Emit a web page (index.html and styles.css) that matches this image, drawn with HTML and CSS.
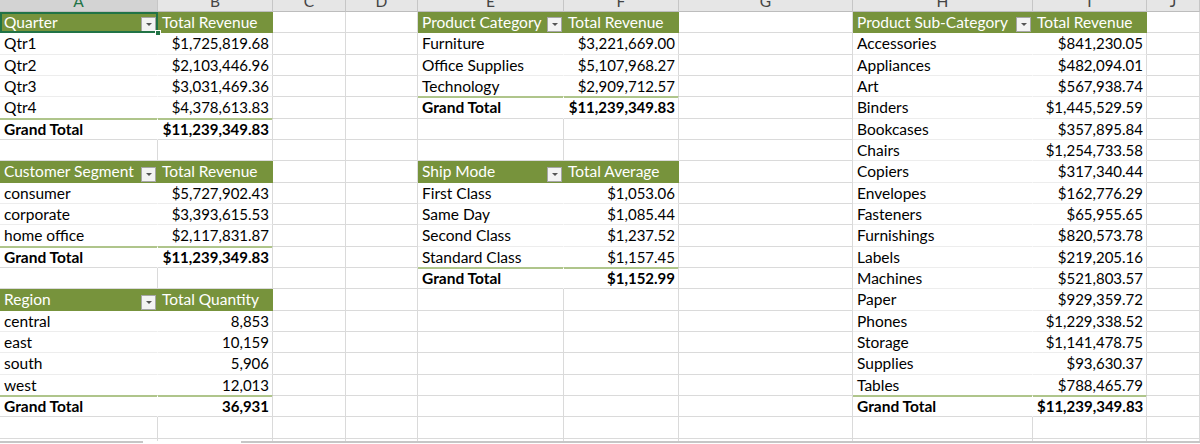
FILE: index.html
```html
<!DOCTYPE html>
<html>
<head>
<meta charset="utf-8">
<title>Pivot tables</title>
<link rel="stylesheet" href="styles.css">
</head>
<body>
<div class="app">
  <div class="sheet">
    <div class="grid">
      <div class="ch sel">A</div><div class="ch">B</div><div class="ch">C</div><div class="ch">D</div><div class="ch">E</div><div class="ch">F</div><div class="ch">G</div><div class="ch">H</div><div class="ch">I</div><div class="ch">J</div>

      <div class="hd cur"><span>Quarter</span><span class="dd"></span></div><div class="hv">Total Revenue</div><div></div><div></div><div class="hd"><span>Product Category</span><span class="dd"></span></div><div class="hv">Total Revenue</div><div></div><div class="hd"><span>Product Sub-Category</span><span class="dd"></span></div><div class="hv">Total Revenue</div><div></div>

      <div class="lb">Qtr1</div><div class="nm">$1,725,819.68</div><div></div><div></div><div class="lb">Furniture</div><div class="nm">$3,221,669.00</div><div></div><div class="lb">Accessories</div><div class="nm">$841,230.05</div><div></div>

      <div class="lb">Qtr2</div><div class="nm">$2,103,446.96</div><div></div><div></div><div class="lb">Office Supplies</div><div class="nm">$5,107,968.27</div><div></div><div class="lb">Appliances</div><div class="nm">$482,094.01</div><div></div>

      <div class="lb">Qtr3</div><div class="nm">$3,031,469.36</div><div></div><div></div><div class="lb end">Technology</div><div class="nm end">$2,909,712.57</div><div></div><div class="lb">Art</div><div class="nm">$567,938.74</div><div></div>

      <div class="lb end">Qtr4</div><div class="nm end">$4,378,613.83</div><div></div><div></div><div class="gt">Grand Total</div><div class="gtv">$11,239,349.83</div><div></div><div class="lb">Binders</div><div class="nm">$1,445,529.59</div><div></div>

      <div class="gt">Grand Total</div><div class="gtv">$11,239,349.83</div><div></div><div></div><div></div><div></div><div></div><div class="lb">Bookcases</div><div class="nm">$357,895.84</div><div></div>

      <div></div><div></div><div></div><div></div><div></div><div></div><div></div><div class="lb">Chairs</div><div class="nm">$1,254,733.58</div><div></div>

      <div class="hd"><span>Customer Segment</span><span class="dd"></span></div><div class="hv">Total Revenue</div><div></div><div></div><div class="hd"><span>Ship Mode</span><span class="dd"></span></div><div class="hv">Total Average</div><div></div><div class="lb">Copiers</div><div class="nm">$317,340.44</div><div></div>

      <div class="lb">consumer</div><div class="nm">$5,727,902.43</div><div></div><div></div><div class="lb">First Class</div><div class="nm">$1,053.06</div><div></div><div class="lb">Envelopes</div><div class="nm">$162,776.29</div><div></div>

      <div class="lb">corporate</div><div class="nm">$3,393,615.53</div><div></div><div></div><div class="lb">Same Day</div><div class="nm">$1,085.44</div><div></div><div class="lb">Fasteners</div><div class="nm">$65,955.65</div><div></div>

      <div class="lb end">home office</div><div class="nm end">$2,117,831.87</div><div></div><div></div><div class="lb">Second Class</div><div class="nm">$1,237.52</div><div></div><div class="lb">Furnishings</div><div class="nm">$820,573.78</div><div></div>

      <div class="gt">Grand Total</div><div class="gtv">$11,239,349.83</div><div></div><div></div><div class="lb end">Standard Class</div><div class="nm end">$1,157.45</div><div></div><div class="lb">Labels</div><div class="nm">$219,205.16</div><div></div>

      <div></div><div></div><div></div><div></div><div class="gt">Grand Total</div><div class="gtv">$1,152.99</div><div></div><div class="lb">Machines</div><div class="nm">$521,803.57</div><div></div>

      <div class="hd"><span>Region</span><span class="dd"></span></div><div class="hv">Total Quantity</div><div></div><div></div><div></div><div></div><div></div><div class="lb">Paper</div><div class="nm">$929,359.72</div><div></div>

      <div class="lb">central</div><div class="nm">8,853</div><div></div><div></div><div></div><div></div><div></div><div class="lb">Phones</div><div class="nm">$1,229,338.52</div><div></div>

      <div class="lb">east</div><div class="nm">10,159</div><div></div><div></div><div></div><div></div><div></div><div class="lb">Storage</div><div class="nm">$1,141,478.75</div><div></div>

      <div class="lb">south</div><div class="nm">5,906</div><div></div><div></div><div></div><div></div><div></div><div class="lb">Supplies</div><div class="nm">$93,630.37</div><div></div>

      <div class="lb end">west</div><div class="nm end">12,013</div><div></div><div></div><div></div><div></div><div></div><div class="lb end">Tables</div><div class="nm end">$788,465.79</div><div></div>

      <div class="gt">Grand Total</div><div class="gtv">36,931</div><div></div><div></div><div></div><div></div><div></div><div class="gt">Grand Total</div><div class="gtv">$11,239,349.83</div><div></div>

      <div></div><div></div><div></div><div></div><div></div><div></div><div></div><div></div><div></div><div></div>

      <div></div><div></div><div></div><div></div><div></div><div></div><div></div><div></div><div></div><div></div>
    </div>
  </div>
  <div class="tabbar">
    <span class="rail first"></span><span class="tab"></span><span class="rail"></span>
  </div>
</div>
</body>
</html>
```

FILE: styles.css
```css
html, body {
  margin: 0;
  padding: 0;
  background: #ffffff;
}

body {
  width: 1200px;
  height: 444px;
  overflow: hidden;
  font-family: Lato, "Liberation Sans", sans-serif;
  font-size: 15px;
  color: #000000;
}

.app {
  display: flex;
  flex-direction: column;
  height: 444px;
}

.sheet {
  height: 441px;
  overflow: hidden;
  flex: none;
}

.grid {
  display: grid;
  grid-template-columns: 158px 115px 73px 72px 146px 115px 174px 180px 114px 1fr;
  grid-template-rows: 12px;
  grid-auto-rows: 21.333px;
}

.grid > div {
  box-sizing: border-box;
  border-right: 1px solid #dadada;
  border-bottom: 1px solid #dadada;
  padding: 0 3px 0 4px;
  line-height: 20.33px;
  white-space: nowrap;
  overflow: hidden;
  min-width: 0;
}

/* column letters */
.grid > .ch {
  display: flex;
  justify-content: center;
  align-items: flex-end;
  padding: 0 0 2px 0;
  line-height: 15px;
  font-size: 15.5px;
  background: #e6e6e6;
  color: #444444;
  border-right-color: #c6c6c6;
  border-bottom-color: #bdbdbd;
}

.grid > .ch.sel {
  background: #d3d3d3;
  color: #217346;
}

/* pivot header */
.grid > .hd,
.grid > .hv {
  background: #77933c;
  color: #ffffff;
  font-size: 15.5px;
  border-right-color: #77933c;
  border-bottom-color: #77933c;
}

.grid > .hd {
  display: flex;
  justify-content: space-between;
  align-items: flex-end;
  padding-right: 1px;
}

.dd {
  flex: none;
  width: 15px;
  height: 15px;
  box-sizing: border-box;
  border: 1px solid #a6a6a6;
  background: #f3f3f3;
  display: flex;
  align-items: center;
  justify-content: center;
}

.dd::after {
  content: "";
  width: 0;
  height: 0;
  border-left: 3px solid transparent;
  border-right: 3px solid transparent;
  border-top: 3px solid #555555;
}

/* active cell selection */
.grid > .cur {
  position: relative;
  overflow: visible;
  z-index: 2;
}

.grid > .cur::after {
  content: "";
  position: absolute;
  left: 0;
  top: 0;
  right: -1px;
  bottom: -1px;
  border: 2px solid #217346;
  pointer-events: none;
}

.grid > .cur::before {
  content: "";
  position: absolute;
  right: -4px;
  bottom: -4px;
  width: 6px;
  height: 6px;
  box-sizing: border-box;
  background: #217346;
  border: 1px solid #ffffff;
  z-index: 3;
}

/* pivot body */
.grid > .lb {
  font-size: 15.5px;
  border-right-color: #ffffff;
  border-bottom-color: #ededed;
}

.grid > .nm {
  text-align: right;
  border-bottom-color: #ededed;
}

.grid > .end {
  border-bottom-color: #afc58b;
}

.grid > .gt,
.grid > .gtv {
  font-weight: bold;
  box-shadow: inset 0 1px 0 #afc58b;
}

.grid > .gt {
  font-size: 15.5px;
  border-right-color: #ffffff;
}

.grid > .gtv {
  text-align: right;
}

/* sheet tab strip */
.tabbar {
  display: flex;
  height: 3px;
  flex: none;
}

.rail {
  flex: 1;
  border-top: 2px solid #c6c6c6;
}

.rail.first {
  flex: none;
  width: 143px;
}

.tab {
  flex: none;
  width: 98px;
  background: #ffffff;
}
```
